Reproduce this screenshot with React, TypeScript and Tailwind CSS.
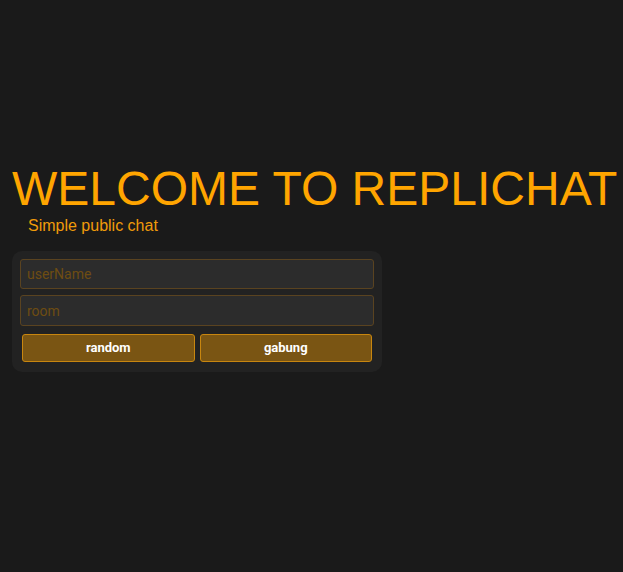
export default function App() {
  return (
    <div className="min-h-screen bg-[#1a1a1a] pt-[161px] pl-[12px]" style={{ fontFamily: '"Liberation Sans", Arial, sans-serif' }}>
      <h1 className="text-[48px] leading-[55px] text-[#ffa500] whitespace-nowrap font-normal">WELCOME TO REPLICHAT</h1>
      <p className="pl-[16px] pt-[1px] text-[16px] leading-[18px] text-[#f09a0a]">Simple public chat</p>
      <div className="mt-[16px] w-[370px] rounded-[10px] bg-[#222222] p-[8px] pb-[10px] flex flex-col" style={{ fontFamily: 'Roboto, sans-serif' }}>
        <input
          placeholder="userName"
          className="h-[30px] w-full rounded-[3px] border border-[#5a4320] bg-[#2c2c2c] px-[6px] text-[14px] text-[#ffa500] placeholder:text-[#6e4c12] outline-none"
        />
        <input
          placeholder="room"
          className="mt-[6px] h-[31px] w-full rounded-[3px] border border-[#5a4320] bg-[#2c2c2c] px-[6px] text-[14px] text-[#ffa500] placeholder:text-[#6e4c12] outline-none"
        />
        <div className="mt-[8px] flex gap-[5px] px-[2px]">
          <button className="h-[28px] flex-1 rounded-[3px] border border-[#c8860f] bg-[#7a5513] text-[13px] font-bold text-white">random</button>
          <button className="h-[28px] flex-1 rounded-[3px] border border-[#c8860f] bg-[#7a5513] text-[13px] font-bold text-white">gabung</button>
        </div>
      </div>
    </div>
  );
}
